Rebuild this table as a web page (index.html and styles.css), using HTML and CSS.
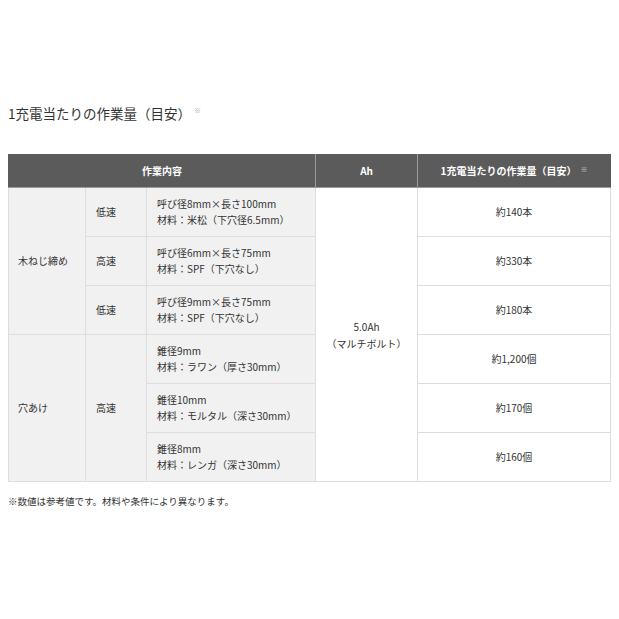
FILE: index.html
```html
<!DOCTYPE html>
<html lang="ja">
<head>
<meta charset="utf-8">
<link rel="stylesheet" href="styles.css">
</head>
<body>
<div class="page">
  <h2 class="title">1充電当たりの作業量（目安）<sup class="note">※</sup></h2>
  <table class="spec">
    <colgroup>
      <col class="k1">
      <col class="k2">
      <col class="k3">
      <col class="k4">
      <col class="k5">
    </colgroup>
    <thead>
      <tr>
        <th colspan="3">作業内容</th>
        <th>Ah</th>
        <th>1充電当たりの作業量（目安）<sup class="hnote">※</sup></th>
      </tr>
    </thead>
    <tbody>
      <tr>
        <td class="g first" rowspan="3">木ねじ締め</td>
        <td class="g">低速</td>
        <td class="g">呼び径8mm×長さ100mm<br>材料：米松（下穴径6.5mm）</td>
        <td class="w ah" rowspan="6">5.0Ah<br>（マルチボルト）</td>
        <td class="w">約140本</td>
      </tr>
      <tr>
        <td class="g">高速</td>
        <td class="g">呼び径6mm×長さ75mm<br>材料：SPF（下穴なし）</td>
        <td class="w">約330本</td>
      </tr>
      <tr>
        <td class="g">低速</td>
        <td class="g">呼び径9mm×長さ75mm<br>材料：SPF（下穴なし）</td>
        <td class="w">約180本</td>
      </tr>
      <tr>
        <td class="g first" rowspan="3">穴あけ</td>
        <td class="g" rowspan="3">高速</td>
        <td class="g">錐径9mm<br>材料：ラワン（厚さ30mm）</td>
        <td class="w">約1,200個</td>
      </tr>
      <tr>
        <td class="g">錐径10mm<br>材料：モルタル（深さ30mm）</td>
        <td class="w">約170個</td>
      </tr>
      <tr>
        <td class="g">錐径8mm<br>材料：レンガ（深さ30mm）</td>
        <td class="w">約160個</td>
      </tr>
    </tbody>
  </table>
  <p class="foot">※数値は参考値です。材料や条件により異なります。</p>
</div>
</body>
</html>
```
FILE: styles.css
```css
html, body {
  margin: 0;
  padding: 0;
  background: #ffffff;
}
body {
  font-family: "Noto Sans CJK JP", "Noto Sans", sans-serif;
  color: #333333;
}
.page {
  padding: 103px 9px 0 8px;
}
.title {
  margin: 0;
  font-size: 13.5px;
  font-weight: 400;
  line-height: 20px;
  color: #333333;
}
.note {
  font-size: 7px;
  color: #aaaaaa;
  vertical-align: top;
  margin-left: 3px;
  position: relative;
  top: -3px;
}
.spec {
  margin-top: 31px;
  width: 602px;
  border-collapse: collapse;
  table-layout: fixed;
  font-size: 10px;
  line-height: 16px;
}
.k1 { width: 77px; }
.k2 { width: 61px; }
.k3 { width: 169px; }
.k4 { width: 102px; }
.k5 { width: 193px; }
.spec th {
  background: #5b5b5b;
  color: #ffffff;
  font-weight: 700;
  height: 32px;
  padding: 0;
  border: 1px solid #9a9a9a;
  border-top-color: #5b5b5b;
  text-align: center;
  font-size: 10px;
  white-space: nowrap;
}
.spec th:first-child { border-left-color: #5b5b5b; }
.spec th:last-child { border-right-color: #5b5b5b; }
.hnote {
  font-size: 7px;
  color: #cccccc;
  vertical-align: top;
  margin-left: 4px;
  position: relative;
  top: -2px;
  font-weight: 400;
}
.spec td {
  border: 1px solid #dddddd;
  height: 48px;
  padding: 0 10px;
  vertical-align: middle;
  white-space: nowrap;
}
.spec td.first { padding-left: 9px; }
.spec tbody tr:first-child td { border-top: none; }
.g { background: #f1f1f1; }
.w { background: #ffffff; text-align: center; }
.ah { line-height: 17px; }
.foot {
  margin: 12px 0 0;
  font-size: 9.5px;
  color: #333333;
}
```
